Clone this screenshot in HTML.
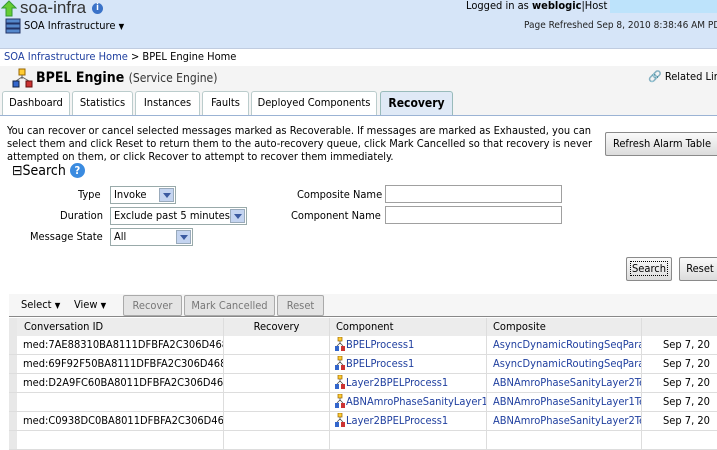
<!DOCTYPE html>
<html><head><meta charset="utf-8"><style>
*{box-sizing:border-box}
body{margin:0;width:717px;height:432px;overflow:hidden;background:#fff;font-family:Tahoma,"DejaVu Sans Condensed","Liberation Sans",sans-serif;font-size:11px;color:#000;position:relative}
.a{position:absolute;white-space:nowrap}
.lnk{color:#1f3f9f}
.btn{position:absolute;border:1px solid #8a8a8a;background:linear-gradient(#fafafa,#dcdcdc);border-radius:2px;text-align:center;line-height:22px;height:24px}
.sel{position:absolute;height:18px;border:1px solid #9aa;background:#fff;padding-left:3px;line-height:16px}
.sel i{position:absolute;right:1px;top:1px;width:15px;height:14px;background:#c4d4f0;border:1px solid #9ab}
.sel i:after{content:"";position:absolute;left:3px;top:4px;border:4px solid transparent;border-top:5px solid #3b5aa0}
.inp{position:absolute;height:18px;border:1px solid #a0a0a0;background:#fff}
.tab{position:absolute;top:91px;height:25px;border:1px solid #bcc;border-bottom:none;border-radius:3px 3px 0 0;background:#fff;line-height:22px;text-align:center}
.row{position:absolute;left:9px;width:708px;height:19px;border-bottom:1px solid #ddd;background:#fff}
.row div{position:absolute;top:0;height:18px;line-height:18px;border-right:1px solid #ddd;white-space:nowrap;overflow:hidden;padding-left:6px}
.c0{left:0;width:8px;background:#e8e8e8;padding:0!important;border:none!important}
.c1{left:8px;width:207px}.c2{left:215px;width:106px}.c3{left:321px;width:157px}.c4{left:478px;width:155px}.c5{left:633px;width:80px;padding-left:21px!important}
.ic{display:inline-block;vertical-align:-3px;margin-right:1px}
</style></head><body>
<div class="a" style="left:0;top:0;width:717px;height:49px;background:#d6e5f8;border-bottom:1px solid #c0cce0"></div>
<svg class="a" style="left:1px;top:0" width="16" height="17"><path d="M8 1 L15 8 H11 V16 H5 V8 H1 Z" fill="#6c3" stroke="#393" stroke-width="1"/></svg>
<div class="a" style="left:20px;top:-2px;font-size:17px;color:#333;font-family:'Liberation Sans',sans-serif">soa-infra</div>
<div class="a" style="left:92px;top:3px;width:11px;height:11px;border-radius:50%;background:#3a72c8;color:#fff;font-size:9px;text-align:center;line-height:11px;font-weight:bold">i</div>
<svg class="a" style="left:5px;top:18px" width="16" height="16"><rect x="1" y="1" width="14" height="4" fill="#58c" stroke="#236"/><rect x="1" y="6" width="14" height="4" fill="#58c" stroke="#236"/><rect x="1" y="11" width="14" height="4" fill="#58c" stroke="#236"/></svg>
<div class="a" style="left:24px;top:19px">SOA Infrastructure <span style="font-size:8px">▼</span></div>
<div class="a" style="left:466px;top:-1px">Logged in as <b>weblogic</b>|Host</div>
<div class="a" style="left:610px;top:0;width:107px;height:13px;background:#bde3fb"></div>
<div class="a" style="left:524px;top:20px;font-size:10px;color:#222">Page Refreshed Sep 8, 2010 8:38:46 AM PD</div>
<div class="a" style="left:4px;top:50px"><span class="lnk">SOA Infrastructure Home</span> &gt; BPEL Engine Home</div>
<div class="a" style="left:0;top:66px;width:717px;height:50px;background:#f4f4f4"></div>
<svg class="a" style="left:12px;top:68px" width="22" height="20"><rect x="7" y="1" width="6" height="6" fill="#fc3" stroke="#960"/><path d="M10 7V11M4 13L10 9L17 13" stroke="#666" fill="none"/><rect x="1" y="13" width="6" height="6" fill="#36c" stroke="#124"/><rect x="14" y="13" width="6" height="6" fill="#c33" stroke="#611"/></svg>
<div class="a" style="left:36px;top:70px;font-size:14px;font-weight:bold">BPEL Engine <span style="font-weight:normal;font-size:12px;color:#333">(Service Engine)</span></div>
<div class="a" style="left:648px;top:70px">🔗 Related Lin</div>
<div class="tab" style="left:2px;width:68px">Dashboard</div>
<div class="tab" style="left:72px;width:61px">Statistics</div>
<div class="tab" style="left:135px;width:65px">Instances</div>
<div class="tab" style="left:202px;width:47px">Faults</div>
<div class="tab" style="left:251px;width:126px">Deployed Components</div>
<div class="tab" style="left:380px;width:73px;background:#dfe9f6;border-color:#9bb;font-weight:bold;font-size:12px">Recovery</div>
<div class="a" style="left:0;top:115px;width:717px;height:1px;background:#9bb3d4"></div>
<div class="a" style="left:7px;top:124px;line-height:13px">You can recover or cancel selected messages marked as Recoverable. If messages are marked as Exhausted, you can<br>select them and click Reset to return them to the auto-recovery queue, click Mark Cancelled so that recovery is never<br>attempted on them, or click Recover to attempt to recover them immediately.</div>
<div class="btn" style="left:605px;top:132px;width:114px">Refresh Alarm Table</div>
<div class="a" style="left:12px;top:163px;font-size:14px">⊟Search <span style="display:inline-block;width:15px;height:15px;border-radius:50%;background:#3a8be0;color:#fff;font-size:11px;font-weight:bold;text-align:center;line-height:15px;vertical-align:1px">?</span></div>
<div class="a" style="left:78px;top:188px">Type</div>
<div class="sel" style="left:110px;top:186px;width:66px">Invoke<i></i></div>
<div class="a" style="left:60px;top:209px">Duration</div>
<div class="sel" style="left:110px;top:207px;width:137px">Exclude past 5 minutes<i></i></div>
<div class="a" style="left:30px;top:230px">Message State</div>
<div class="sel" style="left:110px;top:228px;width:83px">All<i></i></div>
<div class="a" style="left:297px;top:188px">Composite Name</div>
<div class="inp" style="left:385px;top:185px;width:177px"></div>
<div class="a" style="left:291px;top:209px">Component Name</div>
<div class="inp" style="left:385px;top:206px;width:177px"></div>
<div class="btn" style="left:626px;top:257px;width:46px"><span style="border:1px dotted #000;padding:0 1px">Search</span></div>
<div class="btn" style="left:679px;top:257px;width:42px">Reset</div>
<div class="a" style="left:9px;top:294px;width:708px;height:23px;background:#f6f6f6;border-bottom:1px solid #888"></div>
<div class="a" style="left:21px;top:298px">Select <span style="font-size:8px">▼</span></div>
<div class="a" style="left:74px;top:298px">View <span style="font-size:8px">▼</span></div>
<div class="btn" style="left:123px;top:295px;width:59px;height:21px;line-height:19px;color:#777;background:#e4e4e4;border-color:#aaa">Recover</div>
<div class="btn" style="left:184px;top:295px;width:91px;height:21px;line-height:19px;color:#777;background:#e4e4e4;border-color:#aaa">Mark Cancelled</div>
<div class="btn" style="left:277px;top:295px;width:47px;height:21px;line-height:19px;color:#777;background:#e4e4e4;border-color:#aaa">Reset</div>

<div class="row" style="top:318px;background:#ececec"><div class="c0"></div><div class="c1" style="padding-left:7px">Conversation ID</div><div class="c2" style="text-align:center;padding:0">Recovery</div><div class="c3">Component</div><div class="c4">Composite</div><div class="c5"></div></div>
<div class="row" style="top:336px"><div class="c0"></div><div class="c1">med:7AE88310BA8111DFBFA2C306D468</div><div class="c2"></div><div class="c3 lnk" style="padding-left:5px"><svg class="ic" width="10" height="14"><rect x="3" y="0" width="4" height="4" fill="#fc3" stroke="#960" stroke-width=".7"/><path d="M5 4V7M2 9L5 6L8 9" stroke="#555" fill="none" stroke-width=".8"/><rect x="0" y="9" width="4" height="5" fill="#36c"/><rect x="6" y="9" width="4" height="5" fill="#c33"/></svg>BPELProcess1</div><div class="c4 lnk">AsyncDynamicRoutingSeqPara</div><div class="c5">Sep 7, 20</div></div>
<div class="row" style="top:355px"><div class="c0"></div><div class="c1">med:69F92F50BA8111DFBFA2C306D468</div><div class="c2"></div><div class="c3 lnk" style="padding-left:5px"><svg class="ic" width="10" height="14"><rect x="3" y="0" width="4" height="4" fill="#fc3" stroke="#960" stroke-width=".7"/><path d="M5 4V7M2 9L5 6L8 9" stroke="#555" fill="none" stroke-width=".8"/><rect x="0" y="9" width="4" height="5" fill="#36c"/><rect x="6" y="9" width="4" height="5" fill="#c33"/></svg>BPELProcess1</div><div class="c4 lnk">AsyncDynamicRoutingSeqPara</div><div class="c5">Sep 7, 20</div></div>
<div class="row" style="top:374px"><div class="c0"></div><div class="c1">med:D2A9FC60BA8011DFBFA2C306D468</div><div class="c2"></div><div class="c3 lnk" style="padding-left:5px"><svg class="ic" width="10" height="14"><rect x="3" y="0" width="4" height="4" fill="#fc3" stroke="#960" stroke-width=".7"/><path d="M5 4V7M2 9L5 6L8 9" stroke="#555" fill="none" stroke-width=".8"/><rect x="0" y="9" width="4" height="5" fill="#36c"/><rect x="6" y="9" width="4" height="5" fill="#c33"/></svg>Layer2BPELProcess1</div><div class="c4 lnk">ABNAmroPhaseSanityLayer2Te</div><div class="c5">Sep 7, 20</div></div>
<div class="row" style="top:393px"><div class="c0"></div><div class="c1"></div><div class="c2"></div><div class="c3 lnk" style="padding-left:5px"><svg class="ic" width="10" height="14"><rect x="3" y="0" width="4" height="4" fill="#fc3" stroke="#960" stroke-width=".7"/><path d="M5 4V7M2 9L5 6L8 9" stroke="#555" fill="none" stroke-width=".8"/><rect x="0" y="9" width="4" height="5" fill="#36c"/><rect x="6" y="9" width="4" height="5" fill="#c33"/></svg>ABNAmroPhaseSanityLayer1</div><div class="c4 lnk">ABNAmroPhaseSanityLayer1Te</div><div class="c5">Sep 7, 20</div></div>
<div class="row" style="top:412px"><div class="c0"></div><div class="c1">med:C0938DC0BA8011DFBFA2C306D468</div><div class="c2"></div><div class="c3 lnk" style="padding-left:5px"><svg class="ic" width="10" height="14"><rect x="3" y="0" width="4" height="4" fill="#fc3" stroke="#960" stroke-width=".7"/><path d="M5 4V7M2 9L5 6L8 9" stroke="#555" fill="none" stroke-width=".8"/><rect x="0" y="9" width="4" height="5" fill="#36c"/><rect x="6" y="9" width="4" height="5" fill="#c33"/></svg>Layer2BPELProcess1</div><div class="c4 lnk">ABNAmroPhaseSanityLayer2Te</div><div class="c5">Sep 7, 20</div></div>
<div class="row" style="top:431px"><div class="c0"></div><div class="c1"></div><div class="c2"></div><div class="c3"></div><div class="c4"></div><div class="c5"></div></div>
</body></html>
